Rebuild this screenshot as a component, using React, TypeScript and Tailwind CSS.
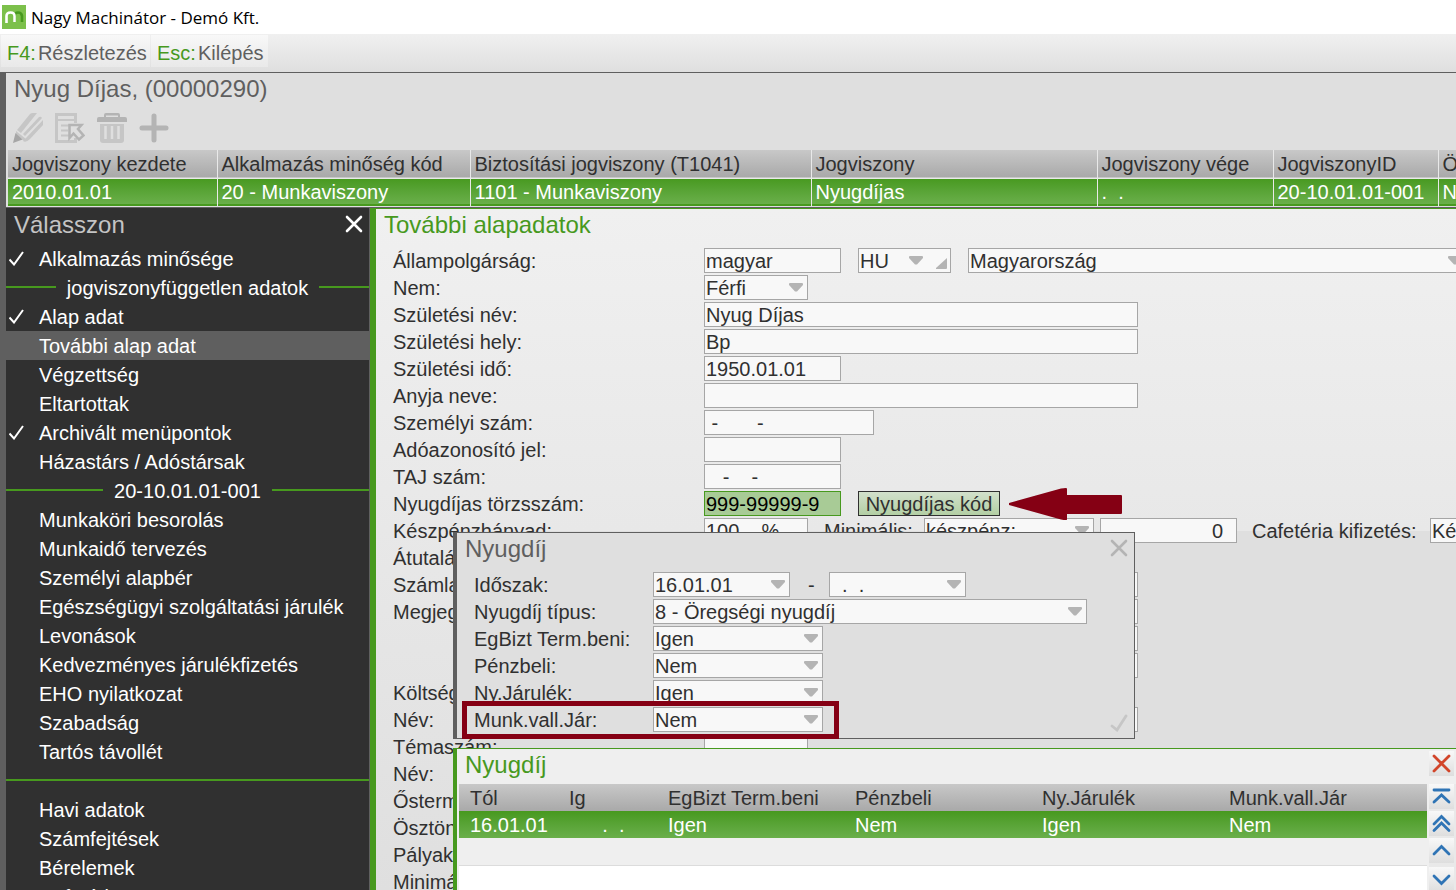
import type { ReactNode } from "react";
import clsx from "clsx";

type MenuItem = { label: string; kind?: "item" | "group" | "line"; checked?: boolean; active?: boolean };

const menu: MenuItem[] = [
  { label: "Alkalmazás minősége", checked: true },
  { label: "jogviszonyfüggetlen adatok", kind: "group" },
  { label: "Alap adat", checked: true },
  { label: "További alap adat", active: true },
  { label: "Végzettség" },
  { label: "Eltartottak" },
  { label: "Archivált menüpontok", checked: true },
  { label: "Házastárs / Adóstársak" },
  { label: "20-10.01.01-001", kind: "group" },
  { label: "Munkaköri besorolás" },
  { label: "Munkaidő tervezés" },
  { label: "Személyi alapbér" },
  { label: "Egészségügyi szolgáltatási járulék" },
  { label: "Levonások" },
  { label: "Kedvezményes járulékfizetés" },
  { label: "EHO nyilatkozat" },
  { label: "Szabadság" },
  { label: "Tartós távollét" },
  { label: "", kind: "line" },
  { label: "Havi adatok" },
  { label: "Számfejtések" },
  { label: "Bérelemek" },
  { label: "Cafetéria" },
];

const relations = [
  { head: "Jogviszony kezdete", value: "2010.01.01", w: "w-[209px]" },
  { head: "Alkalmazás minőség kód", value: "20 - Munkaviszony", w: "w-[253px]" },
  { head: "Biztosítási jogviszony (T1041)", value: "1101 - Munkaviszony", w: "w-[341px]" },
  { head: "Jogviszony", value: "Nyugdíjas", w: "w-[286px]" },
  { head: "Jogviszony vége", value: ".  .", w: "w-[176px]" },
  { head: "JogviszonyID", value: "20-10.01.01-001", w: "w-[165px]" },
  { head: "Össz", value: "Nem", w: "w-[120px]" },
];

const pensions = [
  { head: "Tól", value: "16.01.01", w: "w-[99px]" },
  { head: "Ig", value: "      .  .", w: "w-[99px]" },
  { head: "EgBizt Term.beni", value: "Igen", w: "w-[187px]" },
  { head: "Pénzbeli", value: "Nem", w: "w-[187px]" },
  { head: "Ny.Járulék", value: "Igen", w: "w-[187px]" },
  { head: "Munk.vall.Jár", value: "Nem", w: "" },
];

const box = "h-[25px] border border-[#a6a6a6] bg-[#f8f8f8] px-px pt-[2px] text-[20px] leading-[21px] text-[#303030] whitespace-pre";

function Row({ id, label, wide, children }: { id?: string; label: string; wide?: boolean; children?: ReactNode }) {
  return (
    <div className="flex h-[27px] items-center">
      <label htmlFor={id} className={clsx("shrink-0 whitespace-nowrap", wide ? "w-[311px]" : "w-[179px]")}>
        {label}
      </label>
      {children}
    </div>
  );
}

function Field({ id, value = "", className, label }: { id?: string; value?: string; className?: string; label?: string }) {
  return <input id={id} aria-label={label} defaultValue={value} className={clsx(box, "shrink-0 outline-none", className)} />;
}

function Select({ id, value, className, label, corner }: { id?: string; value: string; className?: string; label?: string; corner?: boolean }) {
  return (
    <div className={clsx("relative flex shrink-0", className)}>
      <select id={id} aria-label={label} className={clsx(box, "w-full appearance-none outline-none")}>
        <option>{value}</option>
      </select>
      <svg
        viewBox="0 0 14 9"
        className={clsx("pointer-events-none absolute top-2 h-[9px] w-[14px] fill-[#b4b4b4]", corner ? "right-7" : "right-[5px]")}
      >
        <path d="M1 0h12q1 0 1 1v1L8 8.5H6L0 2V1q0-1 1-1z" />
      </svg>
      {corner && (
        <svg viewBox="0 0 11 11" className="pointer-events-none absolute right-1 bottom-1 h-[11px] w-[11px] fill-[#b4b4b4]">
          <path d="M11 0v10q0 1-1 1H0V10z" />
        </svg>
      )}
    </div>
  );
}

function Cross({ className }: { className?: string }) {
  return (
    <svg viewBox="0 0 18 18" className={clsx("size-[18px] fill-none stroke-[2.6]", className)} strokeLinecap="round">
      <path d="M2 2l14 14M16 2L2 16" />
    </svg>
  );
}

function PagerButton({ label, d, className }: { label: string; d: string; className?: string }) {
  return (
    <button aria-label={label} className={clsx("flex size-[25px] items-center justify-center bg-linear-to-b from-[#f8f8f8] to-[#dedede]", className)}>
      <svg viewBox="0 0 25 25" className="size-[25px] fill-none stroke-current stroke-[2.8]" strokeLinecap="round">
        <path d={d} />
      </svg>
    </button>
  );
}

function RecordTools() {
  return (
    <div className="flex h-[38px] items-center gap-3 pl-[7px]">
      <button aria-label="Szerkesztés">
        <svg viewBox="0 0 30 30" className="size-[30px]">
          <path d="M4 17L17 1q1-1 3-1h4L8 20zM10 21L26 4q2-1 3 1L12 23zM13 25L30 7v5L17 26q-4 4-7 2z" fill="#c6c6c6" />
          <path d="M3 18l10 8-2 2-8-7z" fill="#c6c6c6" />
          <path d="M2.500 20l7 6.500L0 30z" fill="#a6a6a6" />
        </svg>
      </button>
      <button aria-label="Kiválasztás">
        <svg viewBox="0 0 30 30" className="size-[30px] fill-none" strokeWidth="2">
          <path d="M20.500 10V1.500H1.500V28.500h19V25" stroke="#c6c6c6" strokeWidth="3" />
          <path d="M2 7h18M6 12.500h9M6 17.500h7M6 22.500h9" stroke="#c6c6c6" />
          <path d="M14.500 12h12l-3.500 4 5.500 6.500-4.500 4-5.500-6-4 4.500z" fill="#dfdfdf" stroke="#b4b4b4" strokeWidth="2.500" />
        </svg>
      </button>
      <button aria-label="Törlés">
        <svg viewBox="0 0 30 30" className="size-[30px]">
          <path d="M0 6q0-2 2-2h5V2q0-2 2-2h12q2 0 2 2v2h5q2 0 2 2v3H0zM9 2.500V4h12V2.500z" fill="#b4b4b4" fillRule="evenodd" />
          <path d="M3 11h24v16q0 3-3 3H6q-3 0-3-3z" fill="#c6c6c6" />
          <path d="M8.500 13v13M15 13v13M21.500 13v13" stroke="#dfdfdf" strokeWidth="2.500" />
        </svg>
      </button>
      <button aria-label="Új">
        <svg viewBox="0 0 30 30" className="size-[30px]">
          <path d="M15 3v24M3 15h24" stroke="#b4b4b4" strokeWidth="5" strokeLinecap="round" />
        </svg>
      </button>
    </div>
  );
}

function Sidebar() {
  return (
    <nav className="flex w-[364px] shrink-0 flex-col overflow-hidden border-r border-[#5f5f5f] bg-[#303030] text-white">
      <div className="flex h-9 shrink-0 items-start justify-between pt-px pr-[6px] pl-2">
        <h2 className="text-2xl leading-8 text-[#c4c4c4]">Válasszon</h2>
        <button aria-label="Bezárás" className="pt-[6px]">
          <Cross className="stroke-white" />
        </button>
      </div>
      {menu.map((m, i) => {
        if (m.kind === "line") {
          return (
            <div key={i} className="flex h-[29px] shrink-0 items-center pb-[2px]">
              <div className="h-[2px] flex-1 bg-[#47991e]" />
            </div>
          );
        }
        if (m.kind === "group") {
          return (
            <div key={i} className="flex h-[29px] shrink-0 items-center gap-[11px]">
              <div className="mb-[2px] h-[2px] flex-1 bg-[#47991e]" />
              <span>{m.label}</span>
              <div className="mb-[2px] h-[2px] flex-1 bg-[#47991e]" />
            </div>
          );
        }
        return (
          <button key={i} className={clsx("flex h-[29px] shrink-0 items-center text-left", m.active && "bg-[#5f5f5f]")}>
            <span className="w-[33px] pl-[3px]">
              {m.checked && (
                <svg viewBox="0 0 15 15" className="h-[15px] w-[15px] fill-none stroke-white stroke-2">
                  <path d="M0.500 8.500l4.500 5L14 1" />
                </svg>
              )}
            </span>
            {m.label}
          </button>
        );
      })}
    </nav>
  );
}

function BaseForm() {
  return (
    <form className="pl-[17px]">
      <Row wide id="citizen" label="Állampolgárság:">
        <Field id="citizen" value="magyar" className="w-[137px]" />
        <Select label="Országkód" value="HU" className="ml-[17px] w-[93px]" corner />
        <Select label="Ország" value="Magyarország" className="ml-[17px] w-[499px]" />
      </Row>
      <Row wide id="sex" label="Nem:">
        <Select id="sex" value="Férfi" className="w-[104px]" />
      </Row>
      <Row wide id="birthname" label="Születési név:">
        <Field id="birthname" value="Nyug Díjas" className="w-[434px]" />
      </Row>
      <Row wide id="birthplace" label="Születési hely:">
        <Field id="birthplace" value="Bp" className="w-[434px]" />
      </Row>
      <Row wide id="birthdate" label="Születési idő:">
        <Field id="birthdate" value="1950.01.01" className="w-[137px]" />
      </Row>
      <Row wide id="mother" label="Anyja neve:">
        <Field id="mother" className="w-[434px]" />
      </Row>
      <Row wide id="personal" label="Személyi szám:">
        <Field id="personal" value=" -       -" className="w-[170px]" />
      </Row>
      <Row wide id="tax" label="Adóazonosító jel:">
        <Field id="tax" className="w-[137px]" />
      </Row>
      <Row wide id="taj" label="TAJ szám:">
        <Field id="taj" value="   -    -" className="w-[137px]" />
      </Row>
      <Row wide id="pension" label="Nyugdíjas törzsszám:">
        <input
          id="pension"
          defaultValue="999-99999-9"
          className="h-[25px] w-[137px] shrink-0 border border-[#47991e] bg-[#a8cb96] px-px pt-[2px] text-[20px] leading-[21px] text-black outline-none"
        />
        <button
          type="button"
          className="ml-[17px] h-[25px] w-[142px] shrink-0 border border-[#303030] bg-linear-to-b from-[#d2e0cb] to-[#b3cfa4] pt-[2px] leading-[21px]"
        >
          Nyugdíjas kód
        </button>
        <svg viewBox="0 0 113 35" className="relative z-10 ml-[9px] h-[35px] w-[113px] shrink-0 fill-[#850014]">
          <path d="M0 17L52 2.500q6-1 6 0V9h54q1 0 1 1v17q0 1-1 1H58v5.500q0 1-6 0L0 19z" />
        </svg>
      </Row>
      <Row wide id="cash" label="Készpénzhányad:">
        <Field id="cash" value="100    %" className="w-[104px]" />
        <label htmlFor="minimal" className="w-[116px] shrink-0 pl-4">
          Minimális:
        </label>
        <Select id="minimal" value="készpénz:" className="w-[170px]" />
        <Field label="Összeg" value="0" className="ml-[6px] w-[137px] pr-[13px] text-right" />
        <label htmlFor="cafeteria" className="w-[193px] shrink-0 pl-[15px] whitespace-nowrap">
          Cafetéria kifizetés:
        </label>
        <Select id="cafeteria" value="Készpénz" className="w-[137px]" />
      </Row>
      <Row wide label="Átutalás:" />
      <Row wide id="account" label="Számlaszám:">
        <Field id="account" className="w-[434px]" />
      </Row>
      <Row wide id="note1" label="Megjegyzés:">
        <Field id="note1" className="w-[434px]" />
      </Row>
      <Row wide label="">
        <Field label="Megjegyzés 2" className="w-[434px]" />
      </Row>
      <Row wide label="">
        <Field label="Megjegyzés 3" className="w-[434px]" />
      </Row>
      <Row wide id="cost" label="Költséghely:">
        <Field id="cost" className="w-[104px]" />
      </Row>
      <Row wide id="costname" label="Név:">
        <Field id="costname" className="w-[434px]" />
      </Row>
      <Row wide id="topic" label="Témaszám:">
        <Field id="topic" className="w-[104px]" />
      </Row>
      <Row wide label="Név:" />
      <Row wide label="Őstermelő:" />
      <Row wide label="Ösztöndíjas:" />
      <Row wide label="Pályakezdő:" />
      <Row wide label="Minimálbér:" />
    </form>
  );
}

function PensionDialog() {
  return (
    <section className="absolute top-[323px] left-[77px] h-[207px] w-[682px] border border-l-4 border-[#5f5f5f] bg-[#dfdfdf]">
      <div className="flex h-[38px] items-start justify-between pr-[6px] pl-2">
        <h2 className="text-2xl leading-8 text-[#5f5f5f]">Nyugdíj</h2>
        <button aria-label="Bezárás" className="pt-[6px]">
          <Cross className="stroke-[#b4b4b4]" />
        </button>
      </div>
      <form className="pl-[17px]">
        <Row id="from" label="Időszak:">
          <Select id="from" value="16.01.01" className="w-[137px]" />
          <span className="w-[39px] pl-[18px]">-</span>
          <Select label="Időszak vége" value="&nbsp;&nbsp;.&nbsp;&nbsp;." className="w-[137px]" />
        </Row>
        <Row id="type" label="Nyugdíj típus:">
          <Select id="type" value="8 - Öregségi nyugdíj" className="w-[434px]" />
        </Row>
        <Row id="kind" label="EgBizt Term.beni:">
          <Select id="kind" value="Igen" className="w-[170px]" />
        </Row>
        <Row id="money" label="Pénzbeli:">
          <Select id="money" value="Nem" className="w-[170px]" />
        </Row>
        <Row id="contrib" label="Ny.Járulék:">
          <Select id="contrib" value="Igen" className="w-[170px]" />
        </Row>
        <Row id="employer" label="Munk.vall.Jár:">
          <Select id="employer" value="Nem" className="w-[170px]" />
        </Row>
      </form>
      <button aria-label="Rendben" className="absolute right-[6px] bottom-[6px]">
        <svg viewBox="0 0 18 18" className="size-[18px] fill-none stroke-[#c6c6c6] stroke-[2.8]" strokeLinecap="round">
          <path d="M2 12l5 4L16 2" />
        </svg>
      </button>
      <div className="pointer-events-none absolute -bottom-px left-[5px] h-[38px] w-[377px] border-[5px] border-[#850014]" />
    </section>
  );
}

function PensionList() {
  return (
    <section className="absolute top-[539px] right-0 bottom-0 left-[77px] flex flex-col border-t border-l-4 border-[#47991e] bg-[#efefef]">
      <div className="flex h-[35px] shrink-0 items-start justify-between pr-[2px] pl-2">
        <h2 className="text-2xl leading-8 text-[#47991e]">Nyugdíj</h2>
        <PagerButton label="Bezárás" className="mt-[2px] text-[#d2452a]" d="M5 5l15 15M20 5L5 20" />
      </div>
      <div className="flex min-h-0 flex-1 gap-[2px] pl-[2px]">
        <div className="flex-1 bg-white">
          <table className="w-full table-fixed border-collapse text-left">
            <thead>
              <tr className="h-[27px] bg-linear-to-b from-[#c8c8c8] to-[#a9a9a9]">
                {pensions.map((c) => (
                  <th key={c.head} className={clsx("p-0 pt-[2px] pl-[11px] leading-[25px] font-normal", c.w)}>
                    {c.head}
                  </th>
                ))}
              </tr>
            </thead>
            <tbody>
              <tr className="h-[27px] bg-linear-to-b from-[#47991e] to-[#6aaf4a] text-white">
                {pensions.map((c) => (
                  <td key={c.head} className="p-0 pt-[2px] pl-[11px] leading-[25px] whitespace-pre">
                    {c.value}
                  </td>
                ))}
              </tr>
              <tr className="h-[27px] border-b border-[#dcdcdc] bg-[#efefef]">
                <td colSpan={6} />
              </tr>
            </tbody>
          </table>
        </div>
        <div className="flex w-[27px] flex-col gap-[2px] overflow-hidden bg-[#e9e9e9] text-[#2f74b5]">
          <PagerButton label="Első" className="shrink-0" d="M5 6h15M5 18l7.500-7 7.500 7" />
          <PagerButton label="Lapozás fel" className="shrink-0" d="M5 13l7.500-7.500L20 13M5 19.500l7.500-7.500 7.500 7.500" />
          <PagerButton label="Fel" className="shrink-0" d="M5 16l7.500-7.500L20 16" />
          <PagerButton label="Le" className="mt-[2px] shrink-0" d="M5 9l7.500 7.500L20 9" />
        </div>
      </div>
    </section>
  );
}

export default function App() {
  return (
    <div className="flex h-screen flex-col overflow-hidden bg-white font-['Liberation_Sans',Arial,sans-serif] text-[20px] leading-6 text-[#303030]">
      <header className="flex h-[34px] shrink-0 items-center gap-[5px] pl-[2px]">
        <svg viewBox="0 0 24 24" className="size-6">
          <path d="M0 0h24v24H0z" fill="#7cc04b" />
          <path d="M12.500 17v-6q0-3.500 3.500-3.500t4 3.500v6" fill="none" stroke="#47991e" strokeWidth="2.600" />
          <path d="M4.500 18v-7q0-3.500 4-3.500t4 3.500v6" fill="none" stroke="#fff" strokeWidth="2.600" />
        </svg>
        <h1 className="pt-px font-['Open_Sans',sans-serif] text-[17px] text-black">Nagy Machinátor - Demó Kft.</h1>
      </header>
      <div className="flex h-[38px] shrink-0 gap-px bg-linear-to-b from-[#f0f0f0] to-[#dfdfdf] pt-px pl-px text-[#5f5f5f]">
        <button className="flex h-8 w-[149px] items-center gap-[2px] bg-linear-to-b from-[#f8f8f8] to-[#e9e9e9] pt-1 pl-[6px]">
          <span className="text-[#47991e]">F4:</span>Részletezés
        </button>
        <button className="flex h-8 w-[117px] items-center gap-[2px] bg-linear-to-b from-[#f8f8f8] to-[#e9e9e9] pt-1 pl-[6px]">
          <span className="text-[#47991e]">Esc:</span>Kilépés
        </button>
      </div>
      <div className="flex min-h-0 flex-1 flex-col border-t border-l-[6px] border-[#5f5f5f]">
        <section className="h-[135px] shrink-0 overflow-hidden border-b border-[#5f5f5f] bg-[#dfdfdf]">
          <h2 className="h-9 pl-2 text-2xl leading-8 text-[#5f5f5f]">Nyug Díjas, (00000290)</h2>
          <RecordTools />
          <table className="ml-[2px] mt-[3px] w-[1549px] table-fixed border-collapse text-left">
            <thead>
              <tr className="h-[28px] border-b border-[#e9e9e9] bg-linear-to-b from-[#c8c8c8] to-[#a9a9a9]">
                {relations.map((c) => (
                  <th key={c.head} className={clsx("border-r border-[#e9e9e9] p-0 pt-[2px] pl-1 leading-[25px] font-normal whitespace-nowrap", c.w)}>
                    {c.head}
                  </th>
                ))}
              </tr>
            </thead>
            <tbody>
              <tr className="h-[27px] border-b border-[#47991e] bg-linear-to-b from-[#47991e] to-[#6aaf4a] text-white">
                {relations.map((c) => (
                  <td key={c.head} className="border-r border-[#e9e9e9] p-0 pl-1 leading-[26px] whitespace-pre">
                    {c.value}
                  </td>
                ))}
              </tr>
            </tbody>
          </table>
        </section>
        <div className="flex min-h-0 flex-1">
          <Sidebar />
          <main className="relative min-w-0 flex-1 overflow-hidden border-t border-l-[6px] border-[#47991e] [background:linear-gradient(#dfdfdf,#dfdfdf)_79px_322px_no-repeat,linear-gradient(#f0f0f0,#dfdfdf)]">
            <h2 className="h-[38px] pl-2 text-2xl leading-8 text-[#47991e]">További alapadatok</h2>
            <BaseForm />
            <PensionDialog />
            <PensionList />
          </main>
        </div>
      </div>
    </div>
  );
}
